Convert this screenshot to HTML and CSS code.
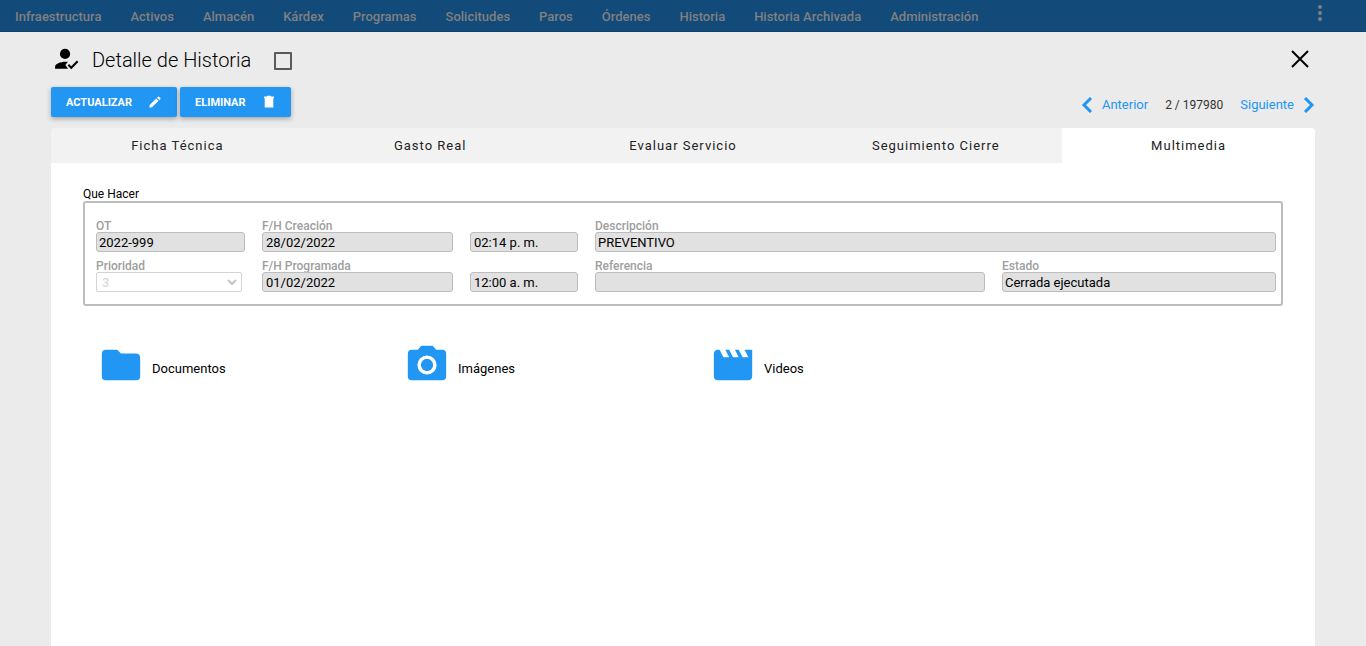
FILE: index.html
```html
<!DOCTYPE html>
<html lang="es">
  <head>
    <meta charset="UTF-8" />
    <meta name="viewport" content="width=device-width, initial-scale=1.0" />
    <title>Detalle de Historia</title>
    <link rel="stylesheet" href="styles.css">
  </head>
  <body>
    <nav class="navbar">
      <a href="#">Infraestructura</a>
      <a href="#">Activos</a>
      <a href="#">Almacén</a>
      <a href="#">Kárdex</a>
      <a href="#">Programas</a>
      <a href="#">Solicitudes</a>
      <a href="#">Paros</a>
      <a href="#">Órdenes</a>
      <a href="#">Historia</a>
      <a href="#">Historia Archivada</a>
      <a href="#">Administración</a>
      <button class="menu" aria-label="Menú">
        <svg viewBox="0 0 24 24" width="24" height="24"><path d="M12 16a2 2 0 1 1 0 4 2 2 0 0 1 0-4m0-6a2 2 0 1 1 0 4 2 2 0 0 1 0-4m0-6a2 2 0 1 1 0 4 2 2 0 0 1 0-4z"/></svg>
      </button>
    </nav>

    <main>
      <header>
        <svg viewBox="0 0 24 24" width="26" height="26"><path d="M21.1 12.5L22.5 13.91L15.97 20.5L12.5 17L13.9 15.59L15.97 17.67L21.1 12.5M10.200 1.700A4.700 4.700 0 1 1 10.200 11.100A4.700 4.700 0 0 1 10.200 1.700M11 13.500L12.9 13.700L10.5 16.5L13 20H1V18C1 15.500 5.58 13.500 11 13.500Z"/></svg>
        <h1>Detalle de Historia</h1>
        <input type="checkbox" class="check" aria-label="Seleccionar historia" />
        <button class="close" aria-label="Cerrar">
          <svg viewBox="0 0 28 28" width="28" height="28"><path d="M6 6l16 16M22 6L6 22"/></svg>
        </button>
      </header>

      <div class="toolbar">
        <button class="btn">
          ACTUALIZAR
          <svg viewBox="-1 -1 26 26" width="16" height="16"><path d="M3 17.25V21h3.75L17.81 9.94l-3.75-3.75L3 17.25zM20.71 7.04a1 1 0 0 0 0-1.41l-2.34-2.34a1 1 0 0 0-1.41 0l-1.83 1.83 3.75 3.75 1.83-1.83z"/></svg>
        </button>
        <button class="btn">
          ELIMINAR
          <svg viewBox="-1 -1 26 26" width="16" height="16"><path d="M5 21h14V6H5zM20 3h-4.500l-1-1h-5l-1 1H4v3h16z"/></svg>
        </button>
        <div class="pager">
          <a href="#">
            <svg viewBox="0 0 12 16" width="12" height="16"><path d="M10 1L3 8l7 7"/></svg>
            Anterior
          </a>
          <span>2 / 197980</span>
          <a href="#">
            Siguiente
            <svg viewBox="0 0 12 16" width="12" height="16"><path d="M2 1l7 7-7 7"/></svg>
          </a>
        </div>
      </div>

      <div class="tabs" role="tablist">
        <button role="tab">Ficha Técnica</button>
        <button role="tab">Gasto Real</button>
        <button role="tab">Evaluar Servicio</button>
        <button role="tab">Seguimiento Cierre</button>
        <button role="tab" class="active" aria-selected="true">Multimedia</button>
      </div>

      <section class="panel">
        <h2>Que Hacer</h2>
        <form class="box">
          <div class="field">
            <label for="ot">OT</label>
            <input type="text" id="ot" value="2022-999" readonly />
          </div>
          <div class="field">
            <label for="creacion">F/H Creación</label>
            <input type="text" id="creacion" class="date" value="28/02/2022" readonly />
          </div>
          <div class="field">
            <input type="text" class="date" aria-label="Hora de creación" value="02:14 p. m." readonly />
          </div>
          <div class="field wide">
            <label for="descripcion">Descripción</label>
            <input type="text" id="descripcion" value="PREVENTIVO" readonly />
          </div>
          <div class="field">
            <label for="prioridad">Prioridad</label>
            <div class="select">
              <select id="prioridad" disabled>
                <option>3</option>
              </select>
              <svg viewBox="0 0 10 6" width="10" height="6"><path d="M1 1l4 4 4-4"/></svg>
            </div>
          </div>
          <div class="field">
            <label for="programada">F/H Programada</label>
            <input type="text" id="programada" class="date" value="01/02/2022" readonly />
          </div>
          <div class="field">
            <input type="text" class="date" aria-label="Hora programada" value="12:00 a. m." readonly />
          </div>
          <div class="field">
            <label for="referencia">Referencia</label>
            <input type="text" id="referencia" readonly />
          </div>
          <div class="field">
            <label for="estado">Estado</label>
            <input type="text" id="estado" value="Cerrada ejecutada" readonly />
          </div>
        </form>

        <div class="media">
          <a href="#">
            <svg viewBox="0 0 24 24" width="46" height="46"><path d="M10 4H4c-1.110 0-2 .89-2 2v12a2 2 0 0 0 2 2h16a2 2 0 0 0 2-2V8c0-1.110-.9-2-2-2h-8l-2-2z"/></svg>
            <span>Documentos</span>
          </a>
          <a href="#">
            <svg viewBox="0 0 24 24" width="46" height="46"><path fill-rule="evenodd" d="M9 2L7.200 4H4a2 2 0 0 0-2 2v12a2 2 0 0 0 2 2h16a2 2 0 0 0 2-2V6a2 2 0 0 0-2-2h-3.200L15 2zM12 7a5 5 0 1 1 0 10 5 5 0 0 1 0-10z"/><circle cx="12" cy="12" r="3.200"/></svg>
            <span>Imágenes</span>
          </a>
          <a href="#">
            <svg viewBox="0 0 24 24" width="46" height="46"><path d="M18 4l2 4h-3l-2-4h-2l2 4h-3l-2-4H8l2 4H7L5 4H4c-1.100 0-2 .9-2 2v12c0 1.100.9 2 2 2h16c1.100 0 2-.9 2-2V4h-4z"/></svg>
            <span>Videos</span>
          </a>
        </div>
      </section>
    </main>
  </body>
</html>
```
FILE: styles.css
```css
* {
  box-sizing: border-box;
}

body {
  display: flex;
  flex-direction: column;
  min-height: 100vh;
  margin: 0;
  background: #ebebeb;
  color: #000;
  font-family: Roboto, sans-serif;
  font-size: 13px;
}

a {
  text-decoration: none;
}

button {
  border: 0;
  padding: 0;
  background: none;
  font-family: inherit;
  cursor: pointer;
}

svg {
  display: block;
  flex: none;
}

.navbar {
  display: flex;
  align-items: center;
  gap: 29px;
  height: 32px;
  padding: 3px 34px 0 15px;
  background: #124a7a;
  border-bottom: 1px solid #11426d;
}

.navbar a {
  color: #808080;
  font-weight: 500;
  line-height: 16px;
}

.menu {
  margin-left: auto;
  margin-bottom: 8px;
  fill: #808080;
}

main {
  display: flex;
  flex-direction: column;
  flex: 1;
  margin: 0 51px;
}

header {
  display: flex;
  align-items: center;
  height: 55px;
  padding-left: 3px;
}

h1 {
  margin: 0 23px 0 12px;
  font-size: 20px;
  font-weight: 300;
}

.check {
  appearance: none;
  width: 18px;
  height: 18px;
  margin: 2px 0 0;
  border: 2px solid #5a5a5a;
  border-radius: 1px;
}

.close {
  margin: 0 1px 2px auto;
  stroke: #000;
  stroke-width: 2;
}

.toolbar {
  display: flex;
  gap: 3px;
  height: 41px;
}

.btn {
  display: flex;
  align-items: center;
  gap: 15px;
  height: 30px;
  padding: 0 14px 0 15px;
  border-radius: 2px;
  background: #2196f3;
  color: #fff;
  fill: #fff;
  font-size: 11px;
  font-weight: 700;
  box-shadow: 0 2px 5px rgba(0, 0, 0, 0.3);
}

.pager {
  display: flex;
  align-items: center;
  gap: 17px;
  height: 35px;
  margin-left: auto;
}

.pager a {
  display: flex;
  align-items: center;
  gap: 9px;
  color: #2196f3;
}

.pager svg {
  fill: none;
  stroke: #2196f3;
  stroke-width: 3;
}

.pager span {
  color: #333;
  font-size: 12px;
}

.tabs {
  display: grid;
  grid-template-columns: repeat(5, 1fr);
  height: 35px;
  border-radius: 4px 4px 0 0;
  overflow: hidden;
  background: #f2f2f2;
}

.tabs button {
  color: #222;
  font-size: 13px;
  letter-spacing: 1px;
}

.tabs .active {
  background: #fff;
}

.panel {
  flex: 1;
  padding: 24px 32px;
  background: #fff;
}

h2 {
  margin: 0;
  font-size: 12px;
  font-weight: 400;
  line-height: 14px;
}

.box {
  display: grid;
  grid-template-columns: 149fr 191fr 108fr 390fr 274fr;
  gap: 8px 17px;
  padding: 17px 5px 12px 11px;
  border: 2px solid #bdbdbd;
  border-radius: 3px;
}

.field {
  display: flex;
  flex-direction: column;
  justify-content: flex-end;
}

.wide {
  grid-column: span 2;
}

.field label {
  color: #9e9e9e;
  font-size: 12px;
  font-weight: 500;
  line-height: 12px;
}

.field input,
.field select {
  width: 100%;
  height: 20px;
  padding: 0 2px;
  border: 1px solid #bdbdbd;
  border-radius: 3px;
  background: #e1e1e1;
  color: #000;
  font-family: inherit;
  font-size: 13px;
}

.field .date {
  padding: 0 3px;
}

.select {
  position: relative;
  margin-right: 3px;
}

.field select {
  display: block;
  appearance: none;
  padding: 0 5px;
  border-color: #d3d3d3;
  border-radius: 2px;
  background: #fff;
  color: #d3d3d3;
  opacity: 1;
}

.select svg {
  position: absolute;
  top: 7px;
  right: 5px;
  fill: none;
  stroke: #c4c4c4;
  stroke-width: 2;
}

.media {
  display: grid;
  grid-template-columns: repeat(4, 1fr);
  margin: 36px -12px 0;
}

.media a {
  display: flex;
  align-items: center;
  gap: 8px;
  padding-left: 27px;
  color: #000;
}

.media svg {
  fill: #2196f3;
}

.media span {
  padding-top: 6px;
}
```
